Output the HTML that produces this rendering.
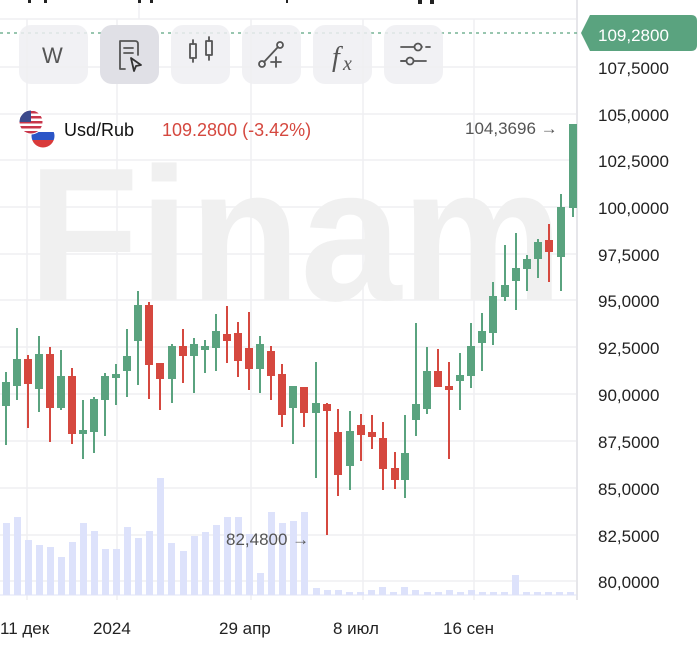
<!DOCTYPE html>
<html><head><meta charset="utf-8"><style>
html,body{margin:0;padding:0;background:#fff;width:700px;height:663px;overflow:hidden;font-family:"Liberation Sans",sans-serif}
.btn{position:absolute;top:25px;height:59px;border-radius:12px;background:rgba(238,238,242,0.85)}
</style></head><body>
<svg width="700" height="663" style="position:absolute;left:0;top:0" xmlns="http://www.w3.org/2000/svg">
<g stroke="#efeff2" stroke-width="1.5">
<line x1="0" y1="19" x2="577" y2="19"/>
<line x1="0" y1="67" x2="577" y2="67"/><line x1="0" y1="114" x2="577" y2="114"/><line x1="0" y1="160" x2="577" y2="160"/><line x1="0" y1="207" x2="577" y2="207"/><line x1="0" y1="254" x2="577" y2="254"/><line x1="0" y1="300" x2="577" y2="300"/><line x1="0" y1="347" x2="577" y2="347"/><line x1="0" y1="394" x2="577" y2="394"/><line x1="0" y1="441" x2="577" y2="441"/><line x1="0" y1="488" x2="577" y2="488"/><line x1="0" y1="535" x2="577" y2="535"/><line x1="0" y1="581" x2="577" y2="581"/>
<line x1="27" y1="19" x2="27" y2="600"/><line x1="117" y1="19" x2="117" y2="600"/><line x1="251" y1="19" x2="251" y2="600"/><line x1="363" y1="19" x2="363" y2="600"/><line x1="474" y1="19" x2="474" y2="600"/>
<line x1="139" y1="0" x2="139" y2="19"/>
</g>
<g fill="#222"><rect x="28" y="0" width="3" height="3"/><rect x="44" y="0" width="3" height="3"/><rect x="138" y="0" width="3" height="3"/><rect x="150" y="0" width="3" height="3"/><rect x="286" y="0" width="2" height="3"/><rect x="418" y="0" width="4" height="4"/><rect x="430" y="0" width="4" height="4"/></g>
<line x1="577" y1="0" x2="577" y2="600" stroke="#e6e6ea" stroke-width="2"/>
<text x="28" y="300" font-family="Liberation Sans" font-weight="bold" font-size="190" fill="#f0f0f0" textLength="535" lengthAdjust="spacingAndGlyphs">Finam</text>
<g fill="#dde2fb">
<rect x="3" y="523" width="7" height="72"/><rect x="14" y="517" width="7" height="78"/><rect x="25" y="540" width="7" height="55"/><rect x="36" y="545" width="7" height="50"/><rect x="47" y="547" width="7" height="48"/><rect x="58" y="557" width="7" height="38"/><rect x="69" y="542" width="7" height="53"/><rect x="80" y="523" width="7" height="72"/><rect x="91" y="531" width="7" height="64"/><rect x="102" y="549" width="7" height="46"/><rect x="113" y="549" width="7" height="46"/><rect x="124" y="527" width="7" height="68"/><rect x="135" y="538" width="7" height="57"/><rect x="146" y="531" width="7" height="64"/><rect x="157" y="478" width="7" height="117"/><rect x="168" y="543" width="7" height="52"/><rect x="180" y="551" width="7" height="44"/><rect x="191" y="536" width="7" height="59"/><rect x="202" y="532" width="7" height="63"/><rect x="213" y="525" width="7" height="70"/><rect x="224" y="517" width="7" height="78"/><rect x="235" y="517" width="7" height="78"/><rect x="246" y="534" width="7" height="61"/><rect x="257" y="573" width="7" height="22"/><rect x="268" y="512" width="7" height="83"/><rect x="279" y="523" width="7" height="72"/><rect x="290" y="521" width="7" height="74"/><rect x="301" y="512" width="7" height="83"/>
<rect x="313" y="588" width="7" height="7"/><rect x="324" y="590" width="7" height="5"/><rect x="335" y="590" width="7" height="5"/><rect x="346" y="592" width="7" height="3"/><rect x="357" y="592" width="7" height="3"/><rect x="368" y="590" width="7" height="5"/><rect x="379" y="587" width="7" height="8"/><rect x="390" y="592" width="7" height="3"/><rect x="401" y="587" width="7" height="8"/><rect x="412" y="590" width="7" height="5"/><rect x="424" y="592" width="7" height="3"/><rect x="435" y="592" width="7" height="3"/><rect x="446" y="590" width="7" height="5"/><rect x="457" y="592" width="7" height="3"/><rect x="468" y="590" width="7" height="5"/><rect x="479" y="592" width="7" height="3"/><rect x="490" y="592" width="7" height="3"/><rect x="501" y="592" width="7" height="3"/><rect x="512" y="575" width="7" height="20"/><rect x="523" y="592" width="7" height="3"/><rect x="534" y="592" width="7" height="3"/><rect x="545" y="592" width="7" height="3"/><rect x="556" y="592" width="7" height="3"/><rect x="567" y="592" width="7" height="3"/>
</g>
<line x1="0" y1="595" x2="577" y2="595" stroke="#dfe3f7" stroke-width="1"/>
<g stroke-width="2">
<g stroke="#5aa37f" fill="#5aa37f">
<line x1="6" y1="372" x2="6" y2="445"/><rect x="3" y="383" width="6" height="22"/>
<line x1="17" y1="328" x2="17" y2="400"/><rect x="14" y="360" width="6" height="25"/>
<line x1="39" y1="336" x2="39" y2="412"/><rect x="36" y="355" width="6" height="33"/>
<line x1="61" y1="350" x2="61" y2="410"/><rect x="58" y="377" width="6" height="30"/>
<line x1="83" y1="400" x2="83" y2="459"/><rect x="80" y="431" width="6" height="2"/>
<line x1="94" y1="397" x2="94" y2="453"/><rect x="91" y="400" width="6" height="31"/>
<line x1="105" y1="373" x2="105" y2="436"/><rect x="102" y="377" width="6" height="22"/>
<line x1="116" y1="364" x2="116" y2="405"/><rect x="113" y="375" width="6" height="2"/>
<line x1="127" y1="329" x2="127" y2="397"/><rect x="124" y="357" width="6" height="13"/>
<line x1="138" y1="291" x2="138" y2="385"/><rect x="135" y="306" width="6" height="34"/>
<line x1="172" y1="344" x2="172" y2="403"/><rect x="169" y="347" width="6" height="31"/>
<line x1="194" y1="338" x2="194" y2="393"/><rect x="191" y="345" width="6" height="10"/>
<line x1="205" y1="340" x2="205" y2="373"/><rect x="202" y="347" width="6" height="2"/>
<line x1="216" y1="314" x2="216" y2="371"/><rect x="213" y="332" width="6" height="15"/>
<line x1="260" y1="336" x2="260" y2="393"/><rect x="257" y="345" width="6" height="23"/>
<line x1="293" y1="386" x2="293" y2="444"/><rect x="290" y="387" width="6" height="20"/>
<line x1="316" y1="362" x2="316" y2="478"/><rect x="313" y="404" width="6" height="8"/>
<line x1="350" y1="411" x2="350" y2="490"/><rect x="347" y="432" width="6" height="33"/>
<line x1="405" y1="415" x2="405" y2="498"/><rect x="402" y="454" width="6" height="25"/>
<line x1="416" y1="323" x2="416" y2="436"/><rect x="413" y="405" width="6" height="14"/>
<line x1="427" y1="347" x2="427" y2="414"/><rect x="424" y="372" width="6" height="36"/>
<line x1="460" y1="353" x2="460" y2="410"/><rect x="457" y="376" width="6" height="4"/>
<line x1="471" y1="323" x2="471" y2="388"/><rect x="468" y="347" width="6" height="28"/>
<line x1="482" y1="313" x2="482" y2="371"/><rect x="479" y="332" width="6" height="10"/>
<line x1="493" y1="282" x2="493" y2="345"/><rect x="490" y="297" width="6" height="35"/>
<line x1="505" y1="245" x2="505" y2="301"/><rect x="502" y="286" width="6" height="10"/>
<line x1="516" y1="233" x2="516" y2="310"/><rect x="513" y="269" width="6" height="11"/>
<line x1="527" y1="255" x2="527" y2="291"/><rect x="524" y="260" width="6" height="8"/>
<line x1="538" y1="239" x2="538" y2="278"/><rect x="535" y="243" width="6" height="15"/>
<line x1="561" y1="194" x2="561" y2="291"/><rect x="558" y="208" width="6" height="48"/>
<line x1="573" y1="125" x2="573" y2="217"/><rect x="570" y="125" width="6" height="82"/>
</g>
<g stroke="#d5483f" fill="#d5483f">
<line x1="28" y1="355" x2="28" y2="428"/><rect x="25" y="360" width="6" height="23"/>
<line x1="50" y1="347" x2="50" y2="442"/><rect x="47" y="355" width="6" height="52"/>
<line x1="72" y1="368" x2="72" y2="444"/><rect x="69" y="377" width="6" height="56"/>
<line x1="149" y1="302" x2="149" y2="399"/><rect x="146" y="306" width="6" height="58"/>
<line x1="160" y1="363" x2="160" y2="410"/><rect x="157" y="364" width="6" height="14"/>
<line x1="183" y1="329" x2="183" y2="383"/><rect x="180" y="347" width="6" height="8"/>
<line x1="227" y1="306" x2="227" y2="363"/><rect x="224" y="335" width="6" height="5"/>
<line x1="238" y1="322" x2="238" y2="377"/><rect x="235" y="334" width="6" height="26"/>
<line x1="249" y1="312" x2="249" y2="390"/><rect x="246" y="349" width="6" height="19"/>
<line x1="271" y1="346" x2="271" y2="400"/><rect x="268" y="352" width="6" height="23"/>
<line x1="282" y1="364" x2="282" y2="427"/><rect x="279" y="375" width="6" height="39"/>
<line x1="304" y1="387" x2="304" y2="427"/><rect x="301" y="388" width="6" height="24"/>
<line x1="327" y1="403" x2="327" y2="535"/><rect x="324" y="405" width="6" height="5"/>
<line x1="338" y1="409" x2="338" y2="496"/><rect x="335" y="433" width="6" height="41"/>
<line x1="361" y1="414" x2="361" y2="461"/><rect x="358" y="426" width="6" height="8"/>
<line x1="372" y1="415" x2="372" y2="449"/><rect x="369" y="433" width="6" height="3"/>
<line x1="383" y1="422" x2="383" y2="490"/><rect x="380" y="439" width="6" height="29"/>
<line x1="395" y1="452" x2="395" y2="489"/><rect x="392" y="469" width="6" height="10"/>
<line x1="438" y1="349" x2="438" y2="386"/><rect x="435" y="372" width="6" height="14"/>
<line x1="449" y1="362" x2="449" y2="459"/><rect x="446" y="387" width="6" height="2"/>
<line x1="549" y1="224" x2="549" y2="282"/><rect x="546" y="241" width="6" height="10"/>
</g>
</g>
<line x1="0" y1="33" x2="580" y2="33" stroke="#5aa37f" stroke-width="1.2" stroke-dasharray="3,4"/>
<text x="465" y="134" font-size="17" fill="#555">104,3696 →</text>
<text x="226" y="545" font-size="17" fill="#555">82,4800 →</text>
<text x="598" y="27" font-size="17" fill="#222">110,0000</text>
<path d="M581 33 L590 15 H691 Q697 15 697 21 V45 Q697 51 691 51 H590 Z" fill="#5aa37f"/>
<text x="598" y="41" font-size="17" fill="#fff">109,2800</text>
<g>
<circle cx="43" cy="136" r="12.5" fill="#fff"/>
<clipPath id="r"><circle cx="43" cy="136" r="11.5"/></clipPath>
<g clip-path="url(#r)"><rect x="30" y="124" width="26" height="8" fill="#fff"/><rect x="30" y="132" width="26" height="8" fill="#2b55c7"/><rect x="30" y="140" width="26" height="9" fill="#d93a3a"/></g>
<circle cx="31" cy="122" r="12.5" fill="#fff"/>
<clipPath id="u"><circle cx="31" cy="122" r="11.5"/></clipPath>
<g clip-path="url(#u)"><rect x="19" y="110" width="24" height="24" fill="#fff"/><rect x="19" y="111" width="24" height="2.5" fill="#c8364a"/><rect x="19" y="116" width="24" height="2.5" fill="#c8364a"/><rect x="19" y="121" width="24" height="2.5" fill="#c8364a"/><rect x="19" y="126" width="24" height="2.5" fill="#c8364a"/><rect x="19" y="131" width="24" height="2.5" fill="#c8364a"/><rect x="19" y="110" width="12" height="12" fill="#3c4a8c"/></g>
</g>
<text x="64" y="136" font-size="18" fill="#111">Usd/Rub</text>
<text x="162" y="136" font-size="18" fill="#d5483f">109.2800 (-3.42%)</text>
<g font-size="17" fill="#222">
<text x="598" y="74">107,5000</text><text x="598" y="121">105,0000</text><text x="598" y="167">102,5000</text><text x="598" y="214">100,0000</text><text x="598" y="261">97,5000</text><text x="598" y="307">95,0000</text><text x="598" y="354">92,5000</text><text x="598" y="401">90,0000</text><text x="598" y="448">87,5000</text><text x="598" y="495">85,0000</text><text x="598" y="542">82,5000</text><text x="598" y="588">80,0000</text>
</g>
<g font-size="17" fill="#222">
<text x="0" y="634">11 дек</text><text x="93" y="634">2024</text><text x="219" y="634">29 апр</text><text x="333" y="634">8 июл</text><text x="443" y="634">16 сен</text>
</g>
</svg>
<div class="btn" style="left:19px;width:69px"></div>
<div class="btn" style="left:100px;width:59px;background:#e0e0e6"></div>
<div class="btn" style="left:171px;width:59px"></div>
<div class="btn" style="left:242px;width:59px"></div>
<div class="btn" style="left:313px;width:59px"></div>
<div class="btn" style="left:384px;width:59px"></div>
<svg width="700" height="100" style="position:absolute;left:0;top:0" xmlns="http://www.w3.org/2000/svg" fill="none" stroke="#555" stroke-width="1.8" stroke-linecap="round" stroke-linejoin="round">
<text x="42" y="63" font-size="22" fill="#555" stroke="none">W</text>
<path d="M125 69 H120 V41 H135 Q138 41 138 44 V55"/><path d="M124 48 H133 M124 53 H133"/><path d="M131 58 L141 65 L136 66 L134 71 Z" stroke="#333"/>
<rect x="190" y="44" width="6" height="14"/><path d="M193 40 V44 M193 58 V62"/><rect x="206" y="41" width="6" height="14"/><path d="M209 37 V41 M209 55 V60"/>
<circle cx="262" cy="64" r="3"/><circle cx="280" cy="45" r="3"/><path d="M264 62 L278 47"/><path d="M276 57 V67 M271 62 H281"/>
<text x="332" y="66" font-family="Liberation Serif" font-style="italic" font-size="28" fill="#555" stroke="none">f</text><text x="343" y="70" font-family="Liberation Serif" font-style="italic" font-size="20" fill="#555" stroke="none">x</text>
<path d="M401 47 H422 M401 61 H426"/><circle cx="418" cy="47" r="3.5" fill="#eeeef2"/><circle cx="410" cy="61" r="3.5" fill="#eeeef2"/><path d="M426 47 H430 M401 61 H405"/>
</svg>
</body></html>
